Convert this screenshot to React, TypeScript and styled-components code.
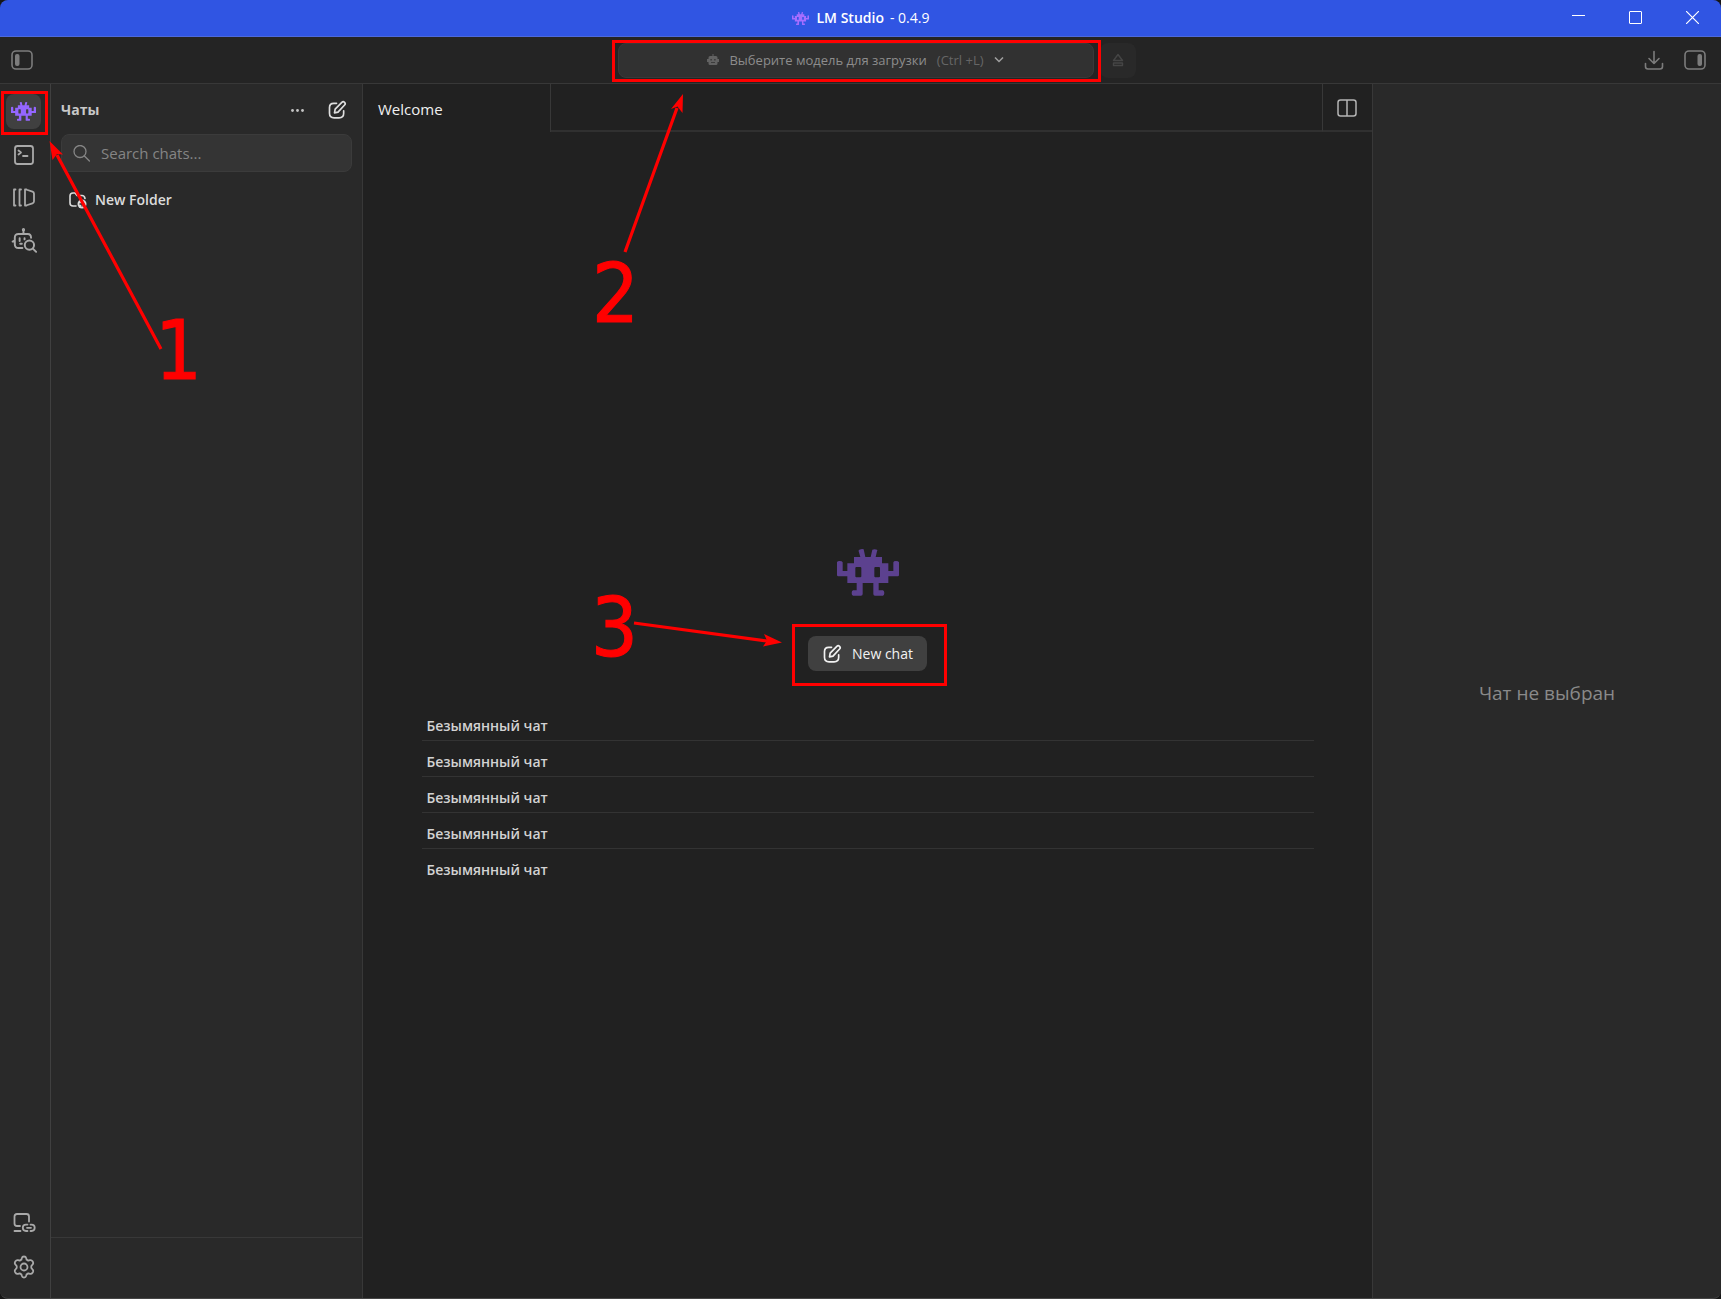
import React from "react";
import styled, { createGlobalStyle, css } from "styled-components";

const c = {
  title: "#3055e3",
  toolbar: "#242424",
  panel: "#292929",
  main: "#212121",
  line: "#383838",
  mark: "#ff0000",
  font: '"Segoe UI", "Open Sans", "Noto Sans", sans-serif',
};

const GlobalStyle = createGlobalStyle`
  * { box-sizing: border-box; }
  body { margin: 0; background: #161616; font-family: ${c.font}; font-size: 14px; line-height: 20px; color: #dcdcdc; }
  button, input { font: inherit; color: inherit; }
  button { border: 0; padding: 0; background: none; display: inline-flex; align-items: center; justify-content: center; cursor: pointer; }
  svg { display: block; flex: none; }
`;

const Shell = styled.div`
  position: relative;
  display: flex;
  flex-direction: column;
  min-height: 100vh;
  background: ${c.panel};
  border-bottom: 1px solid #454545;
  border-radius: 8px;
  overflow: hidden;
`;

const TitleBar = styled.header`
  display: grid;
  grid-template-columns: 1fr auto 1fr;
  align-items: center;
  height: 37px;
  background: ${c.title};
  border-bottom: 1px solid #4d69dc;
  color: #fff;
`;

const AppName = styled.div`
  grid-column: 2;
  display: flex;
  align-items: center;
  strong { margin: 0 6px 0 8px; font-weight: 600; }
`;

const TitleLogo = styled.span`
  color: #a56eff;
`;

const WindowControls = styled.div`
  display: flex;
  align-self: start;
  justify-content: flex-end;
  button { width: 57px; height: 34px; }
`;

const Toolbar = styled.div`
  display: grid;
  grid-template-columns: 1fr auto 1fr;
  align-items: center;
  height: 47px;
  padding: 0 15px 0 11px;
  background: ${c.toolbar};
  border-bottom: 1px solid ${c.line};
  color: #7c7c7c;
`;

const ToolbarSide = styled.div`
  display: flex;
  align-items: center;
  justify-content: space-between;
`;

const ToolbarActions = styled.div`
  display: flex;
  gap: 20px;
`;

const ModelPicker = styled.button`
  position: relative;
  && {
    gap: 10px;
    width: 476px;
    height: 35px;
    margin-right: 6px;
    border: 1px solid #393939;
    border-radius: 8px;
    background: #313131;
    color: #8d8d8d;
    font-size: 13px;
    white-space: nowrap;
  }
`;

const Shortcut = styled.span`
  color: #666;
`;

const EjectButton = styled.button`
  && {
    width: 36px;
    height: 35px;
    border-radius: 8px;
    background: #292929;
    color: #454545;
  }
`;

const Body = styled.div`
  flex: 1;
  display: flex;
`;

const Rail = styled.nav`
  display: flex;
  flex-direction: column;
  align-items: center;
  gap: 8px;
  width: 51px;
  padding: 10px 3px 14px 0;
  border-right: 1px solid #404040;
  color: #a9a9a9;
`;

const RailButton = styled.button<{ $active?: boolean; $push?: boolean }>`
  position: relative;
  && {
    width: 35px;
    height: 35px;
    border-radius: 8px;
    ${(p) => p.$active && css`background: #404040; color: #9466ff;`}
    ${(p) => p.$push && css`margin-top: auto;`}
  }
`;

const Sidebar = styled.aside`
  display: flex;
  flex-direction: column;
  width: 312px;
  border-right: 1px solid ${c.line};
`;

const SidebarTop = styled.div`
  flex: 1;
  padding: 8px 10px;
`;

const SidebarHead = styled.div`
  display: flex;
  align-items: center;
  gap: 12px;
  height: 36px;
  padding-right: 1px;
  h2 { flex: 1; margin: 0; font-size: 14px; font-weight: 700; color: #c8c8c8; }
  button { width: 28px; height: 28px; color: #dedede; }
`;

const SearchBox = styled.label`
  display: flex;
  align-items: center;
  gap: 11px;
  height: 38px;
  margin-top: 6px;
  padding: 0 11px;
  border: 1px solid #3b3b3b;
  border-radius: 8px;
  background: #343434;
  color: #858585;
  input {
    flex: 1;
    min-width: 0;
    border: 0;
    padding: 0;
    outline: 0;
    background: none;
    font-size: 15px;
  }
  input::placeholder { color: #858585; opacity: 1; }
`;

const FolderButton = styled.button`
  && {
    gap: 8px;
    margin: 14px 0 0 8px;
    height: 28px;
    font-weight: 600;
    color: #dcdcdc;
  }
`;

const SidebarFoot = styled.div`
  height: 61px;
  border-top: 1px solid ${c.line};
`;

const Main = styled.main`
  flex: 1;
  display: flex;
  flex-direction: column;
  min-width: 0;
  background: ${c.main};
`;

const TabBar = styled.div`
  display: flex;
  height: 48px;
`;

const Tab = styled.button`
  && {
    justify-content: flex-start;
    width: 188px;
    padding: 2px 15px 0;
    border-right: 1px solid ${c.line};
    color: #f0f0f0;
    font-size: 15px;
  }
`;

const TabSpace = styled.div`
  flex: 1;
  border-bottom: 2px solid #303030;
`;

const SplitButton = styled.button`
  && {
    width: 50px;
    padding: 2px 2px 0 0;
    border-left: 1px solid ${c.line};
    border-bottom: 2px solid #303030;
    color: #b4b4b4;
  }
`;

const Welcome = styled.section`
  flex: 1;
  display: flex;
  flex-direction: column;
  align-items: center;
  justify-content: center;
  padding: 4px 16px 0;
  color: #5c418f;
`;

const NewChat = styled.button`
  position: relative;
  && {
    gap: 10px;
    width: 119px;
    height: 35px;
    margin: 40px 0 34px;
    border-radius: 8px;
    background: #404040;
    color: #f2f2f2;
  }
`;

const ChatList = styled.ul`
  width: 100%;
  max-width: 892px;
  margin: 0;
  padding: 0;
  list-style: none;
`;

const ChatRow = styled.li`
  padding: 8px 5px 1px;
  border-bottom: 1px solid #333;
  &:last-child { border-bottom-color: transparent; }
  a { display: block; padding: 3px 0; color: #d2d2d2; font-weight: 600; text-decoration: none; }
`;

const Inspector = styled.aside`
  display: flex;
  align-items: center;
  justify-content: center;
  width: 349px;
  padding-top: 4px;
  border-left: 1px solid ${c.line};
  color: #8a8a8a;
  font-size: 19px;
`;

const Highlight = styled.span<{ $top: number; $right: number; $bottom: number; $left: number }>`
  position: absolute;
  inset: ${(p) => `${-p.$top}px ${-p.$right}px ${-p.$bottom}px ${-p.$left}px`};
  border: 3px solid ${c.mark};
  pointer-events: none;
`;

const Arrows = styled.svg`
  position: absolute;
  top: 0;
  left: 0;
  pointer-events: none;
`;

const Step = styled.span<{ $x: number; $y: number }>`
  position: absolute;
  left: ${(p) => p.$x}px;
  top: ${(p) => p.$y}px;
  color: ${c.mark};
  font: 82px/96px "DejaVu Sans Condensed", "DejaVu Sans", sans-serif;
  -webkit-text-stroke: 1px ${c.mark};
  pointer-events: none;
`;

const Invader = ({ w, h }: { w: number; h: number }) => (
  <svg width={w} height={h} viewBox="0 0 186 141" preserveAspectRatio="none" fill="currentColor" aria-hidden="true">
    <path
      fillRule="evenodd"
      d="M67 2q8-3 13-1l5 23h16l5-22q7-3 14 0q2 2 0 5l-4 17h19v19h19v23h15V40q1-4 8-4t9 4v38q0 4-4 4h-28v20h-29v22h13q4 2 4 8t-4 8h-24q-5 0-5-5v-33H77v33q0 5-5 5H48q-4-2-4-8t4-8h11v-22H31V82H4q-4 0-4-4V40q1-4 8-4t9 4v26h14V43h20V24h19L65 7q-1-4 2-5zM55 57v25q0 3 3 3h12q3 0 3-3V57q0-3-3-3H58q-3 0-3 3zM112 57v25q0 3 3 3h11q3 0 3-3V57q0-3-3-3h-11q-3 0-3 3z"
    />
  </svg>
);

const Icon = ({ size = 24, w = 1.8, children }: { size?: number; w?: number; children: React.ReactNode }) => (
  <svg width={size} height={size} viewBox="0 0 24 24" fill="none" stroke="currentColor" strokeWidth={w} strokeLinecap="round" strokeLinejoin="round" aria-hidden="true">
    {children}
  </svg>
);

const PanelIcon = ({ right }: { right?: boolean }) => (
  <svg width="22" height="20" viewBox="0 0 22 20" fill="none" stroke="currentColor" strokeWidth="1.6" aria-hidden="true">
    <rect x="1" y="1" width="20" height="18" rx="4" />
    <rect x={right ? 13.5 : 4} y="4" width="4.5" height="12" rx="2" fill="currentColor" stroke="none" />
  </svg>
);

const ComposeIcon = () => (
  <Icon size={20} w={2}>
    <path d="M11.500 4H8Q3 4 3 9v7q0 5.500 5.500 5.500h6q5.500 0 5.500-5.500v-3" />
    <path d="M9 15.500l.8-4.500 8-8.200a2.200 2.200 0 0 1 3.300 3.200L13.200 14.600z" />
  </Icon>
);

const chats = [1, 2, 3, 4, 5];

export default function App() {
  return (
    <>
      <GlobalStyle />
      <Shell>
        <TitleBar>
          <AppName>
            <TitleLogo><Invader w={17} h={13} /></TitleLogo>
            <strong>LM Studio</strong>
            <span>- 0.4.9</span>
          </AppName>
          <WindowControls>
            <button aria-label="Minimize"><svg width="13" height="13" stroke="#fff"><path d="M0 4.500h13" /></svg></button>
            <button aria-label="Maximize"><svg width="13" height="13" fill="none" stroke="#fff"><rect x=".5" y=".5" width="12" height="12" rx=".5" /></svg></button>
            <button aria-label="Close"><svg width="13" height="13" stroke="#fff" strokeWidth="1.2"><path d="M0 0l13 13M13 0L0 13" /></svg></button>
          </WindowControls>
        </TitleBar>

        <Toolbar>
          <ToolbarSide><button aria-label="Toggle sidebar"><PanelIcon /></button></ToolbarSide>
          <ModelPicker>
            <svg width="12" height="12" viewBox="0 0 12 12" fill="#626262" aria-hidden="true">
              <path fillRule="evenodd" d="M5.500 0h1v2H9q1.500 0 1.500 1.500V5H12v3h-1.500v1.500Q10.500 11 9 11H3Q1.500 11 1.500 9.500V8H0V5h1.500V3.500Q1.500 2 3 2h2.500zM3.500 5v1.500h1.200V5zM7.300 5v1.500h1.200V5zM4 8.200v.8h4v-.8z" />
            </svg>
            <span>Выберите модель для загрузки</span>
            <Shortcut>(Ctrl +L)</Shortcut>
            <svg width="10" height="6" viewBox="0 0 10 6" fill="none" stroke="#a0a0a0" strokeWidth="1.5" aria-hidden="true"><path d="M1 .5l4 4 4-4" /></svg>
            <Highlight $top={4} $right={8} $bottom={5} $left={7} />
          </ModelPicker>
          <ToolbarSide>
            <EjectButton aria-label="Eject model">
              <svg width="12" height="14" viewBox="0 0 12 14" fill="none" stroke="currentColor" strokeWidth="1.4" strokeLinejoin="round"><path d="M6 1.500L1.500 7.500h9zM1.500 10h9v2.500h-9z" /></svg>
            </EjectButton>
            <ToolbarActions>
              <button aria-label="Downloads">
                <svg width="20" height="20" viewBox="0 0 20 20" fill="none" stroke="currentColor" strokeWidth="1.6" strokeLinecap="round" strokeLinejoin="round"><path d="M10 1.500v12M5 8.500l5 5 5-5M1.500 13.500v3q0 2.500 2.500 2.500h12q2.500 0 2.500-2.500v-3" /></svg>
              </button>
              <button aria-label="Toggle right panel"><PanelIcon right /></button>
            </ToolbarActions>
          </ToolbarSide>
        </Toolbar>

        <Body>
          <Rail>
            <RailButton $active aria-label="Chats">
              <Invader w={25} h={19} />
              <Highlight $top={3} $right={7} $bottom={6} $left={5} />
            </RailButton>
            <RailButton aria-label="Developer">
              <Icon><rect x="3" y="3" width="18" height="18" rx="2.5" /><path d="M6.500 7.500l2.500 2-2.500 2M11 13h4.500" /></Icon>
            </RailButton>
            <RailButton aria-label="Models">
              <Icon><path d="M3.500 3.500H2V19.500h1.500M9 3.500H7.500V19.500H9M14.500 3.500H13V19.500h1.500M14 3.500l6.500 2.200q1.500.5 1.500 2v7.600q0 1.500-1.500 2L14 19.500" /></Icon>
            </RailButton>
            <RailButton aria-label="Discover">
              <Icon size={26}><path d="M11.500 2v3M10.500 18.500H7q-3.500 0-3.500-3.500V9Q3.500 5.500 7 5.500h8.500Q18.500 5.500 18.500 9M3.500 11.500L1.500 12.500M8 9.500v2.500M12.500 9.500v1M8.500 14.500h1.500" /><circle cx="17" cy="15.800" r="4.300" /><path d="M20.200 19l3 3" /><circle cx="11.500" cy="1.500" r=".6" /></Icon>
            </RailButton>
            <RailButton $push aria-label="Remote devices">
              <Icon><path d="M8 14H5q-2.500 0-2.500-2.500V4.500Q2.500 2 5 2h9.500Q17 2 17 4.500V9.500M2.500 19H8.500M15.500 19H14q-3.200 0-3.200-3.200t3.200-3.200h1.500M18.500 12.600h1q3.200 0 3.200 3.200T19.500 19h-1M15 15.800h4" /></Icon>
            </RailButton>
            <RailButton aria-label="Settings">
              <Icon><path d="M12 1.500q1.800 0 2.200 1.600l.4 1.600q1 .4 1.700 1l1.700-.5q1.600-.4 2.500 1l.5 1q.6 1.400-.5 2.500L19.300 11v2l1.200 1.300q1.100 1.100.5 2.500l-.5 1q-.9 1.400-2.500 1l-1.700-.5q-.7.6-1.700 1l-.4 1.600q-.4 1.600-2.200 1.600t-2.200-1.600l-.4-1.600q-1-.4-1.700-1l-1.700.5q-1.600.4-2.500-1l-.5-1q-.6-1.400.5-2.500L4.700 13v-2L3.500 9.700Q2.400 8.600 3 7.200l.5-1q.9-1.400 2.500-1l1.700.5q.7-.6 1.700-1l.4-1.600q.4-1.600 2.200-1.600z" /><circle cx="12" cy="12" r="3.500" /></Icon>
            </RailButton>
          </Rail>

          <Sidebar>
            <SidebarTop>
              <SidebarHead>
                <h2>Чаты</h2>
                <button aria-label="More"><svg width="13" height="3" fill="#c4c4c4"><circle cx="1.500" cy="1.500" r="1.4" /><circle cx="6.500" cy="1.500" r="1.4" /><circle cx="11.500" cy="1.500" r="1.4" /></svg></button>
                <button aria-label="New chat"><ComposeIcon /></button>
              </SidebarHead>
              <SearchBox>
                <svg width="17" height="17" viewBox="0 0 17 17" fill="none" stroke="currentColor" strokeWidth="1.3" strokeLinecap="round" aria-hidden="true"><circle cx="7" cy="6.500" r="6" /><path d="M11.400 11l5 5" /></svg>
                <input type="search" aria-label="Search chats" placeholder="Search chats..." />
              </SearchBox>
              <FolderButton>
                <svg width="18" height="17" viewBox="0 0 18 17" fill="none" stroke="currentColor" strokeWidth="1.6" strokeLinecap="round" aria-hidden="true">
                  <path d="M7 14H4q-3 0-3-3V4q0-3 3-3h2l2 2.500h5q2.500 0 3 3" />
                  <circle cx="13" cy="12" r="4.500" fill="currentColor" stroke="none" />
                  <path d="M13 10v4M11 12h4" stroke={c.panel} strokeWidth="1.3" />
                </svg>
                New Folder
              </FolderButton>
            </SidebarTop>
            <SidebarFoot />
          </Sidebar>

          <Main>
            <TabBar>
              <Tab>Welcome</Tab>
              <TabSpace />
              <SplitButton aria-label="Split view">
                <svg width="20" height="18" viewBox="0 0 20 18" fill="none" stroke="currentColor" strokeWidth="1.5"><rect x="1" y="1" width="18" height="16" rx="2.5" /><path d="M10 1v16" /></svg>
              </SplitButton>
            </TabBar>
            <Welcome>
              <Invader w={62} h={47} />
              <NewChat>
                <ComposeIcon />
                New chat
                <Highlight $top={12} $right={20} $bottom={15} $left={16} />
              </NewChat>
              <ChatList>
                {chats.map((id) => (
                  <ChatRow key={id}><a href={`#chat-${id}`}>Безымянный чат</a></ChatRow>
                ))}
              </ChatList>
            </Welcome>
          </Main>

          <Inspector>Чат не выбран</Inspector>
        </Body>

        <Arrows width="800" height="700" fill={c.mark} stroke={c.mark} aria-hidden="true">
          <path d="M161 349L57 155M625 252L677 108M634 623L767 641" strokeWidth="3.2" />
          <path stroke="none" d="M49.500 141L63 154.500L57 154L52.500 160zM683 94L682.500 113L677.500 106.500L671 109zM782 642.500L763 646.500L767 640.500L764 634z" />
        </Arrows>
        <Step $x={155} $y={303}>1</Step>
        <Step $x={592} $y={246}>2</Step>
        <Step $x={591} $y={580}>3</Step>
      </Shell>
    </>
  );
}
